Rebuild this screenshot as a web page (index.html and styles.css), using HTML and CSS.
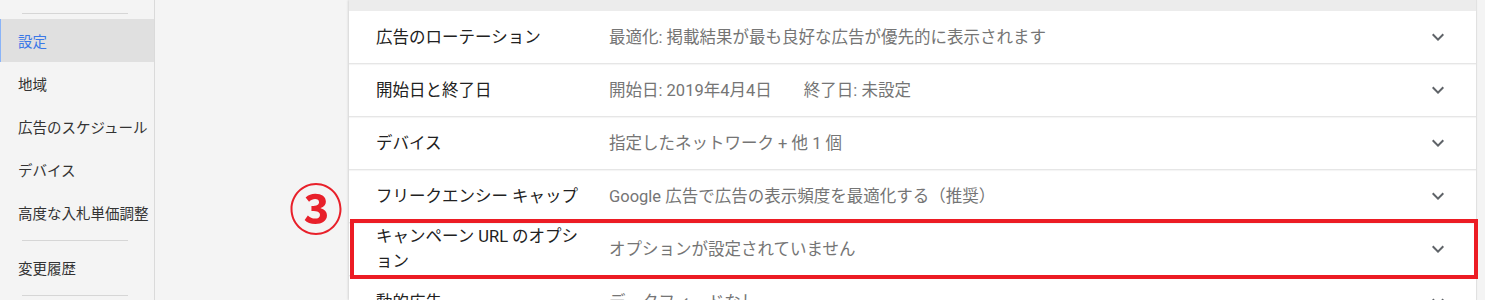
FILE: index.html
```html
<!DOCTYPE html>
<html lang="ja">

<head>
  <meta charset="utf-8">
  <title>キャンペーン設定</title>
  <link rel="stylesheet" href="styles.css">
</head>

<body>
  <nav class="sidebar">
    <div class="divider"></div>
    <a class="nav-item active">設定</a>
    <a class="nav-item">地域</a>
    <a class="nav-item">広告のスケジュール</a>
    <a class="nav-item">デバイス</a>
    <a class="nav-item">高度な入札単価調整</a>
    <div class="divider"></div>
    <a class="nav-item">変更履歴</a>
    <div class="divider"></div>
  </nav>

  <main class="main">
    <div class="step-mark">③</div>

    <section class="card">
      <div class="card-top"></div>

      <div class="setting">
        <div class="setting-label">広告のローテーション</div>
        <div class="setting-value">最適化: 掲載結果が最も良好な広告が優先的に表示されます</div>
        <svg class="chevron" viewBox="0 0 24 24"><path d="M16.59 8.59L12 13.17 7.41 8.59 6 10l6 6 6-6z"/></svg>
      </div>

      <div class="setting">
        <div class="setting-label">開始日と終了日</div>
        <div class="setting-value">
          <span class="date">開始日: 2019年4月4日</span>
          <span class="date">終了日: 未設定</span>
        </div>
        <svg class="chevron" viewBox="0 0 24 24"><path d="M16.59 8.59L12 13.17 7.41 8.59 6 10l6 6 6-6z"/></svg>
      </div>

      <div class="setting">
        <div class="setting-label">デバイス</div>
        <div class="setting-value">指定したネットワーク + 他 1 個</div>
        <svg class="chevron" viewBox="0 0 24 24"><path d="M16.59 8.59L12 13.17 7.41 8.59 6 10l6 6 6-6z"/></svg>
      </div>

      <div class="setting">
        <div class="setting-label">フリークエンシー キャップ</div>
        <div class="setting-value">Google 広告で広告の表示頻度を最適化する（推奨）</div>
        <svg class="chevron" viewBox="0 0 24 24"><path d="M16.59 8.59L12 13.17 7.41 8.59 6 10l6 6 6-6z"/></svg>
      </div>

      <div class="setting marked">
        <div class="setting-label">キャンペーン URL のオプション</div>
        <div class="setting-value">オプションが設定されていません</div>
        <svg class="chevron" viewBox="0 0 24 24"><path d="M16.59 8.59L12 13.17 7.41 8.59 6 10l6 6 6-6z"/></svg>
      </div>

      <div class="setting">
        <div class="setting-label">動的広告</div>
        <div class="setting-value">データフィードなし</div>
        <svg class="chevron" viewBox="0 0 24 24"><path d="M16.59 8.59L12 13.17 7.41 8.59 6 10l6 6 6-6z"/></svg>
      </div>
    </section>
  </main>
</body>

</html>
```

FILE: styles.css
```css
html,
body {
  height: 100%;
}

body {
  margin: 0;
  display: flex;
  background: #f4f4f4;
  font-family: Roboto, "Noto Sans CJK JP", sans-serif;
  color: #212121;
  overflow: hidden;
}

.sidebar {
  flex: 0 0 154px;
  padding-top: 7px;
  border-right: 1px solid #dadada;
  background: #f4f4f4;
}

.divider {
  height: 1px;
  margin: 6px 26px 5px 22px;
  background: #d6d6d6;
}

.nav-item {
  display: flex;
  align-items: center;
  height: 43px;
  padding-left: 18px;
  font-size: 14.5px;
  color: #333333;
  white-space: nowrap;
}

.nav-item.active {
  padding-left: 17px;
  border-left: 1px solid #8ab4f8;
  background: #e0e0e0;
  color: #3b78e7;
}

.main {
  position: relative;
  flex: 1;
  padding: 0 8px 0 194px;
}

.step-mark {
  position: absolute;
  left: 134px;
  top: 180px;
  font-family: "Noto Sans CJK JP", sans-serif;
  font-size: 54px;
  font-weight: 700;
  line-height: 1;
  color: #e8202a;
}

.card {
  height: 100%;
  background: #ffffff;
  border-right: 1px solid #e2e2e2;
  box-shadow: -1px 0 2px rgba(0, 0, 0, 0.12);
}

.card-top {
  height: 11px;
  background: #ececec;
}

.setting {
  position: relative;
  display: flex;
  align-items: center;
  height: 52px;
  padding: 0 26px 0 27px;
  border-bottom: 1px solid #e6e6e6;
  box-shadow: 0 1px 1px rgba(0, 0, 0, 0.04);
  font-size: 16.5px;
  line-height: 25px;
}

.setting-label {
  flex: 0 0 212px;
  margin-right: 21px;
}

.setting-value {
  flex: 1;
  color: #757575;
}

.date + .date {
  margin-left: 28px;
}

.chevron {
  flex: 0 0 24px;
  width: 24px;
  height: 24px;
  fill: #5f6368;
}

.marked::after {
  content: "";
  position: absolute;
  top: -4px;
  bottom: -4px;
  left: 1px;
  right: -2px;
  border: 4px solid #ec1c24;
}
```
